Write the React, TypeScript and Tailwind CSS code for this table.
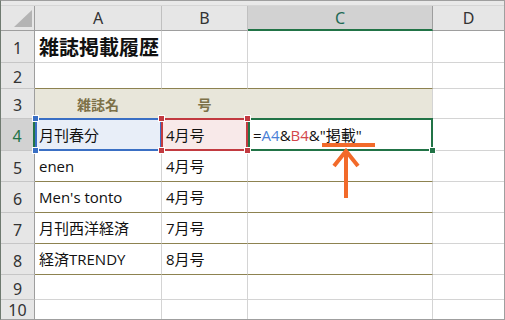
const jp = "font-['Open_Sans','Noto_Sans_CJK_JP',sans-serif]"
const ui = "font-['Noto_Sans','Liberation_Sans',sans-serif]"

const rowHeights: Record<number, string> = {
  1: "h-[32px]",
  2: "h-[26px]",
  3: "h-[30px]",
  4: "h-[32px]",
  5: "h-[31px]",
  6: "h-[31px]",
  7: "h-[31px]",
  8: "h-[31px]",
  9: "h-[25px]",
  10: "h-[19px]",
}

function RowNum({ n, active = false, last = false }: { n: number; active?: boolean; last?: boolean }) {
  return (
    <div
      className={`w-[34px] shrink-0 flex items-center justify-center text-[16px] leading-none ${ui} ${
        active
          ? "bg-[#d2d2d2] text-[#217346] border-r-2 border-r-[#217346]"
          : "bg-[#e6e6e6] text-[#333] border-r border-r-[#9e9e9e]"
      } ${last ? "pt-[1px]" : "pt-[3px] border-b border-b-[#c6c6c6]"}`}
    >
      {n}
    </div>
  )
}

function Cell({
  w,
  children,
  className = "",
}: {
  w: string
  children?: React.ReactNode
  className?: string
}) {
  return (
    <div className={`${w} shrink-0 flex items-center px-[3px] text-[15px] leading-none text-[#111] ${jp} ${className}`}>
      {children}
    </div>
  )
}

function Handle({ pos, color }: { pos: string; color: string }) {
  return <div className={`absolute z-10 w-[7px] h-[7px] border border-white ${pos} ${color}`} />
}

const grid = "border-r border-b border-[#d4d4d4]"
const olive = "border-r border-r-[#d4d4d4] border-b border-b-[#8d8250]"

export default function App() {
  const data = [
    { r: 5, a: "enen", b: "4月号" },
    { r: 6, a: "Men's tonto", b: "4月号" },
    { r: 7, a: "月刊西洋経済", b: "7月号" },
    { r: 8, a: "経済TRENDY", b: "8月号" },
  ]

  return (
    <div className="w-[505px] h-[320px] bg-white">
      <div className="relative w-[505px] h-[320px] border border-[#9f9f9f] border-l-[#6f7a70] overflow-hidden flex flex-col">
        {/* top strip */}
        <div className="h-[5px] shrink-0 bg-[#e9e9e9] border-b border-[#d6d6d6]" />

        {/* column headers */}
        <div className={`h-[25px] shrink-0 flex text-[16px] leading-none text-[#333] ${ui}`}>
          <div className="w-[34px] shrink-0 bg-[#e6e6e6] border-r border-b border-[#9e9e9e] relative overflow-hidden">
            <svg className="absolute right-[2px] bottom-[3px]" width="18" height="17" viewBox="0 0 18 17">
              <polygon points="18,0 18,17 0,17" fill="#b4b4b4" />
            </svg>
          </div>
          <div className="w-[127px] shrink-0 bg-[#e6e6e6] border-r border-r-[#c0c0c0] border-b border-b-[#9e9e9e] flex items-center justify-center">A</div>
          <div className="w-[86px] shrink-0 bg-[#e6e6e6] border-r border-r-[#c0c0c0] border-b border-b-[#9e9e9e] flex items-center justify-center">B</div>
          <div className="w-[185px] shrink-0 bg-[#d2d2d2] border-r border-r-[#9e9e9e] border-b-2 border-b-[#217346] text-[#1e6a55] flex items-center justify-center">C</div>
          <div className="w-[71px] shrink-0 bg-[#e6e6e6] border-b border-b-[#9e9e9e] flex items-center justify-center">D</div>
        </div>

        {/* row 1 */}
        <div className={`${rowHeights[1]} shrink-0 flex`}>
          <RowNum n={1} />
          <Cell w="w-[127px]" className={`${grid} overflow-visible`}>
            <span className="text-[20px] font-bold whitespace-nowrap pl-[1px] font-['Noto_Sans_CJK_JP',sans-serif]">雑誌掲載履歴</span>
          </Cell>
          <Cell w="w-[86px]" className={grid} />
          <Cell w="w-[185px]" className={grid} />
          <Cell w="w-[71px]" className="border-b border-[#d4d4d4]" />
        </div>

        {/* row 2 */}
        <div className={`${rowHeights[2]} shrink-0 flex`}>
          <RowNum n={2} />
          <Cell w="w-[127px]" className={olive} />
          <Cell w="w-[86px]" className={olive} />
          <Cell w="w-[185px]" className={olive} />
          <Cell w="w-[71px]" className="border-b border-[#d4d4d4]" />
        </div>

        {/* row 3 */}
        <div className={`${rowHeights[3]} shrink-0 flex`}>
          <RowNum n={3} />
          <Cell w="w-[127px]" className="bg-[#e8e6da] border-r border-r-[#e8e6da] border-b border-b-[#8d8250] justify-center">
            <span className="font-bold text-[14px] text-[#7d7148] pt-[2px]">雑誌名</span>
          </Cell>
          <Cell w="w-[86px]" className="bg-[#e8e6da] border-r border-r-[#e8e6da] border-b border-b-[#8d8250] justify-center">
            <span className="font-bold text-[14px] text-[#7d7148] pt-[2px]">号</span>
          </Cell>
          <Cell w="w-[185px]" className="bg-[#e8e6da] border-r border-r-[#d4d4d4] border-b border-b-[#8d8250]" />
          <Cell w="w-[71px]" className="border-b border-[#d4d4d4]" />
        </div>

        {/* row 4 (editing) */}
        <div className={`${rowHeights[4]} shrink-0 flex`}>
          <RowNum n={4} active />
          <Cell w="w-[127px]" className={`${olive} relative bg-[#e8eef8]`}>
            <div className="absolute left-0 -top-[1px] -right-[1px] -bottom-[1px] border-2 border-[#3a6fc4]" />
            <Handle pos="-left-[3px] -top-[4px]" color="bg-[#3a6fc4]" />
            <Handle pos="-left-[3px] -bottom-[4px]" color="bg-[#3a6fc4]" />
            <span className="pl-[1px] pt-[1px]">月刊春分</span>
          </Cell>
          <Cell w="w-[86px]" className={`${olive} relative bg-[#f8e9e9]`}>
            <div className="absolute -inset-[1px] border-2 border-[#c23a40]" />
            <Handle pos="-left-[4px] -top-[4px]" color="bg-[#c23a40]" />
            <Handle pos="-right-[4px] -top-[4px]" color="bg-[#c23a40]" />
            <Handle pos="-left-[4px] -bottom-[4px]" color="bg-[#c23a40]" />
            <Handle pos="-right-[4px] -bottom-[4px]" color="bg-[#c23a40]" />
            <span className="pl-[1px] pt-[1px]">4月号</span>
          </Cell>
          <Cell w="w-[185px]" className={`${olive} relative`}>
            <div className="absolute left-0 -top-[1px] -right-[1px] -bottom-[1px] border-2 border-[#217346]" />
            <Handle pos="-right-[4px] -bottom-[4px]" color="bg-[#217346]" />
            <span className="pl-[2px] pt-[1px] whitespace-nowrap">
              =<span className="text-[#4a7fd6]">A4</span>&amp;<span className="text-[#d2474c]">B4</span>&amp;"掲載"
            </span>
          </Cell>
          <Cell w="w-[71px]" className="border-b border-[#d4d4d4]" />
        </div>

        {/* rows 5-8 */}
        {data.map((d) => (
          <div key={d.r} className={`${rowHeights[d.r]} shrink-0 flex`}>
            <RowNum n={d.r} />
            <Cell w="w-[127px]" className={olive}>
              <span className="pl-[1px] pt-[1px] whitespace-nowrap">{d.a}</span>
            </Cell>
            <Cell w="w-[86px]" className={olive}>
              <span className="pl-[1px] pt-[1px]">{d.b}</span>
            </Cell>
            <Cell w="w-[185px]" className={olive} />
            <Cell w="w-[71px]" className="border-b border-[#d4d4d4]" />
          </div>
        ))}

        {/* row 9 */}
        <div className={`${rowHeights[9]} shrink-0 flex`}>
          <RowNum n={9} />
          <Cell w="w-[127px]" className={grid} />
          <Cell w="w-[86px]" className={grid} />
          <Cell w="w-[185px]" className={grid} />
          <Cell w="w-[71px]" className="border-b border-[#d4d4d4]" />
        </div>

        {/* row 10 */}
        <div className={`${rowHeights[10]} shrink-0 flex`}>
          <RowNum n={10} last />
          <Cell w="w-[127px]" className="border-r border-[#d4d4d4]" />
          <Cell w="w-[86px]" className="border-r border-[#d4d4d4]" />
          <Cell w="w-[185px]" className="border-r border-[#d4d4d4]" />
          <Cell w="w-[71px]" />
        </div>

        {/* annotation arrow */}
        <svg
          className="absolute -left-[1px] -top-[1px] pointer-events-none z-20"
          width="505"
          height="320"
          viewBox="0 0 505 320"
        >
          <rect x="322" y="143" width="53" height="4" fill="#f26a2a" />
          <line x1="346" y1="152" x2="346" y2="198" stroke="#f26a2a" strokeWidth="4" />
          <polyline points="334,166 346,151 358,166" fill="none" stroke="#f26a2a" strokeWidth="4" strokeLinejoin="miter" />
        </svg>
      </div>
    </div>
  )
}
